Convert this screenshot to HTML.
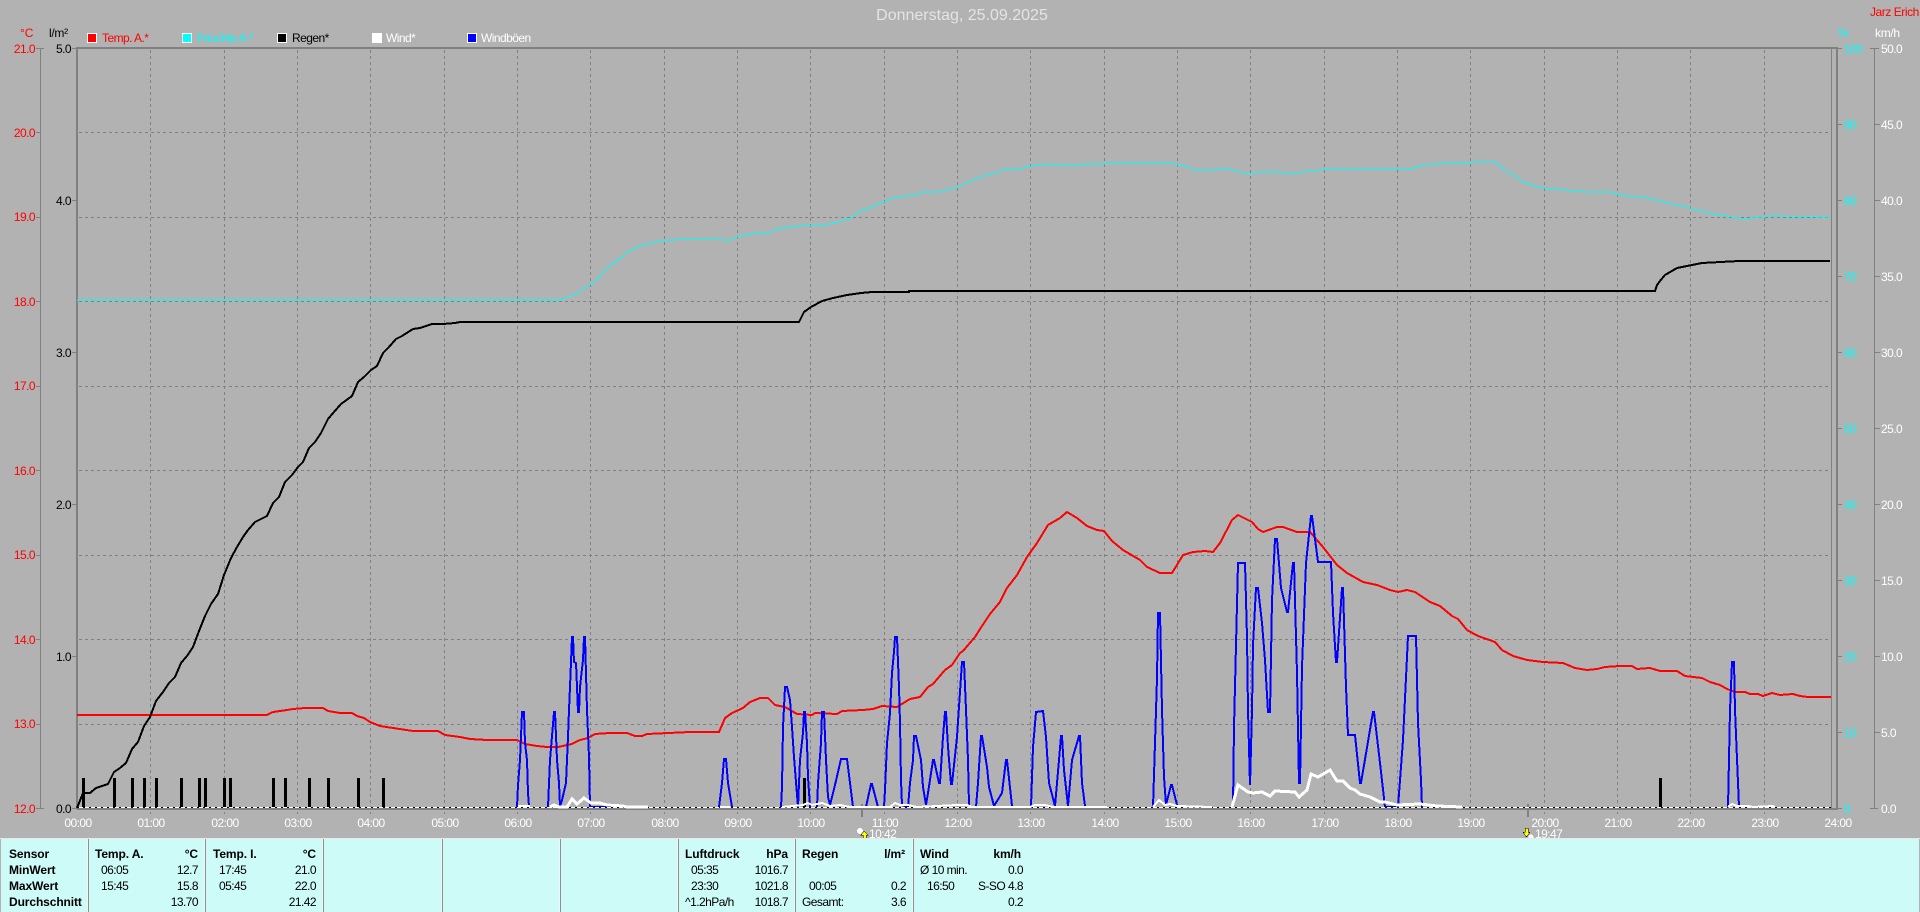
<!DOCTYPE html>
<html lang="de"><head><meta charset="utf-8"><title>Donnerstag, 25.09.2025</title>
<style>
html,body{margin:0;padding:0;width:1920px;height:912px;overflow:hidden;background:#b2b2b2}
svg{display:block;position:absolute;left:0;top:0}
text{font-family:"Liberation Sans",sans-serif;font-size:12px;letter-spacing:-.55px}
.b{font-weight:bold;letter-spacing:-.1px;fill:#000}
.t{fill:#000}
.e{text-anchor:end}
.m{text-anchor:middle;fill:#fff}
.r{fill:#f00}.c{fill:#0ff}.w{fill:#fff}
.g{stroke:#808080;stroke-width:1;stroke-dasharray:3 3;fill:none}
.l{fill:none;stroke-linejoin:miter}
.a{stroke:#808080;fill:none}
</style></head><body>
<svg width="1920" height="912" viewBox="0 0 1920 912" xmlns="http://www.w3.org/2000/svg" shape-rendering="crispEdges">
<rect width="1920" height="912" fill="#b2b2b2"/>

<!-- horizontal grid -->
<path class="g" d="M79 132.5H1831M79 217.5H1831M79 301.5H1831M79 386.5H1831M79 470.5H1831M79 555.5H1831M79 639.5H1831M79 724.5H1831"/>
<!-- vertical grid -->
<path class="g" d="M150.5 50V814M224.5 50V814M297.5 50V814M370.5 50V814M444.5 50V814M517.5 50V814M590.5 50V814M664.5 50V814M737.5 50V814M810.5 50V814M884.5 50V814M957.5 50V814M1030.5 50V814M1104.5 50V814M1177.5 50V814M1250.5 50V814M1324.5 50V814M1397.5 50V814M1470.5 50V814M1544.5 50V814M1617.5 50V814M1690.5 50V814M1764.5 50V814"/>

<!-- axes -->
<path class="a" stroke-width="2" d="M76 48H1838"/>
<path class="a" stroke-width="2" d="M77 47V809"/>
<path class="a" stroke-width="2" d="M1837 47V809"/>
<path class="a" stroke-width="1" d="M1831.5 48V808"/>
<path class="a" stroke-width="2" d="M77 809H1838"/>
<path class="a" stroke-width="1" d="M40.5 48V808M36 48.5H44M36 132.5H40M36 217.5H40M36 301.5H40M36 386.5H40M36 470.5H40M36 555.5H40M36 639.5H40M36 724.5H40M36 808.5H44"/>
<path class="a" stroke-width="1" d="M72 48.5H77M72 200.5H77M72 352.5H77M72 504.5H77M72 656.5H77M72 808.5H77"/>
<path class="a" stroke-width="1" d="M1838 48.5H1842M1838 124.5H1842M1838 200.5H1842M1838 276.5H1842M1838 352.5H1842M1838 428.5H1842M1838 504.5H1842M1838 580.5H1842M1838 656.5H1842M1838 732.5H1842M1838 808.5H1842"/>
<path class="a" stroke-width="1" d="M1874.5 48V808M1870 48.5H1879M1875 124.5H1880M1875 200.5H1880M1875 276.5H1880M1875 352.5H1880M1875 428.5H1880M1875 504.5H1880M1875 580.5H1880M1875 656.5H1880M1875 732.5H1880M1870 808.5H1878"/>
<path class="a" stroke-width="2" d="M862 804V817M1528 804V817"/>

<!-- rain bars -->
<path fill="none" stroke="#000" stroke-width="3" d="M83.5 778V807M114.5 778V807M132.5 778V807M144.5 778V807M156.5 778V807M181.5 778V807M199.5 778V807M205.5 778V807M224.5 778V807M230.5 778V807M273.5 778V807M285.5 778V807M309.5 778V807M328.5 778V807M358.5 778V807M383.5 778V807M804.5 778V807M1660.5 778V807"/>

<!-- temperature -->
<polyline class="l" stroke="#f00" stroke-width="2" points="77,715 267,715 273,712 287,710 293,709 305,708 323,708 328,711 340,713 352,713 357,716 364,718 370,722 380,726 393,728 413,731 438,731 445,735 460,737 470,739 487,740 517,740 525,744 537,746 547,747 558,747 572,744 580,740 588,738 595,734 610,733 627,733 635,736 642,736 647,734 690,732 719,732 725,718 732,713 743,708 750,702 760,698 768,698 775,705 785,707 797,714 812,715 815,713 837,714 842,711 863,710 873,709 882,706 897,707 910,699 920,697 928,687 933,684 945,670 952,665 960,653 963,651 975,637 982,626 990,614 1000,602 1007,588 1017,575 1027,557 1037,543 1048,525 1060,518 1067,512 1077,518 1087,526 1097,530 1104,531 1112,541 1123,550 1140,560 1147,567 1160,573 1172,573 1183,555 1193,552 1205,551 1213,552 1220,543 1232,520 1238,515 1252,522 1258,529 1263,532 1277,527 1283,527 1297,532 1310,532 1323,547 1337,565 1347,573 1363,582 1377,585 1390,590 1398,592 1407,590 1415,592 1430,602 1440,606 1452,616 1458,619 1467,630 1478,636 1495,642 1502,650 1513,656 1527,660 1543,662 1563,663 1575,668 1587,670 1597,669 1605,667 1620,666 1632,666 1637,669 1650,668 1660,671 1677,671 1685,676 1702,678 1710,682 1720,685 1727,689 1735,692 1745,692 1750,694 1758,694 1763,696 1772,693 1780,695 1793,694 1800,696 1808,697 1831,697"/>

<!-- humidity -->
<polyline class="l" stroke="#0ff" stroke-width="1" points="77,300 560,300 576,294 586,287 597,280 604,271 613,263 622,257 629,251 640,246 654,242 669,240 697,239 720,238 726,241 740,236 751,234 769,233 776,229 797,226 826,225 851,218 860,211 872,207 883,202 897,197 917,195 922,192 940,192 954,188 969,182 983,176 997,173 1004,169 1019,169 1029,166 1051,164 1056,166 1063,164 1076,166 1086,164 1100,164 1125,163 1171,163 1177,165 1186,166 1193,170 1216,170 1220,168 1234,170 1239,172 1250,174 1257,172 1280,172 1293,174 1300,172 1318,171 1323,169 1350,169 1354,168 1361,169 1411,169 1420,166 1432,164 1468,163 1471,162 1496,162 1504,170 1514,175 1521,181 1532,185 1543,188 1564,190 1586,192 1611,192 1618,195 1647,198 1690,208 1714,214 1745,219 1769,216 1830,217"/>

<!-- rain sum -->
<polyline class="l" stroke="#000" stroke-width="2" points="77,808 83,793 90,793 96,788 108,784 114,772 120,768 126,763 132,749 138,742 144,726 150,717 156,701 163,692 169,683 175,677 181,663 187,656 193,647 199,631 205,616 211,604 218,594 224,575 231,558 237,547 243,537 248,530 255,522 267,516 273,503 279,497 285,482 292,475 298,467 303,462 309,448 315,442 321,433 328,419 334,412 341,404 352,396 358,382 364,377 371,370 377,366 383,353 389,347 396,339 402,336 413,329 420,328 432,324 443,324 455,323 460,322 799,322 801,318 804,312 811,307 822,301 833,298 847,295 861,293 872,292 909,292 909,291 1655,291 1657,285 1660,281 1665,275 1677,268 1702,263 1739,261 1830,261"/>

<!-- gusts -->
<g fill="none" stroke="#00f" stroke-width="2">
<polyline points="517,807 518,785 520,760 522,712 524,712 525,743 527,760 528,793 529,806"/>
<polyline points="548,807 550,760 554,712 555,712 557,760 559,783 560,806 562,800 566,783 568,737 569,710 570,687 572,637 573,637 574,662 576,663 577,687 578,712 579,712 580,687 583,660 584,637 585,637 587,710 589,757 590,807 612,807"/>
<polyline points="719,807 722,783 724,759 726,759 728,783 732,807"/>
<polyline points="781,807 782,787 783,727 785,687 787,687 790,700 792,727 794,757 798,807 800,760 803,733 804,712 805,712 807,743 808,777 810,807"/>
<polyline points="817,807 818,783 821,743 822,712 824,712 826,760 828,797 830,805 835,785 841,759 847,759 850,783 853,807"/>
<polyline points="866,807 871,784 872,784 878,807"/>
<polyline points="884,807 885,790 887,743 890,713 892,673 894,652 895,637 897,637 899,687 900,723 901,780 902,805 908,807 910,783 913,760 914,736 916,736 921,760 923,787 926,805 928,793 933,760 934,760 939,783 940,783 943,737 945,712 946,712 948,747 951,784 952,784 957,737 962,662 964,662 966,710 968,760 969,805"/>
<polyline points="976,807 978,783 981,736 982,736 987,767 989,787 994,806 1002,793 1006,760 1007,760 1012,806"/>
<polyline points="1031,807 1033,747 1036,712 1043,711 1046,737 1049,783 1055,806 1059,760 1061,736 1062,736 1064,770 1068,806 1072,760 1079,736 1080,736 1082,783 1085,806"/>
<polyline points="1153,807 1155,743 1157,678 1158,613 1160,613 1162,710 1164,777 1166,805 1171,785 1172,785 1177,805"/>
<polyline points="1233,807 1234,727 1236,645 1238,563 1245,563 1247,637 1248,710 1250,785 1252,710 1253,645 1256,588 1258,588 1262,623 1265,660 1268,712 1270,712 1272,600 1275,539 1277,539 1281,588 1287,612 1288,612 1293,563 1294,563 1297,673 1299,783 1300,783 1302,667 1306,563 1311,516 1312,516 1318,562 1331,562 1333,613 1336,662 1337,662 1342,588 1343,588 1346,687 1348,735 1355,735 1360,783 1361,783 1373,712 1374,712 1380,763 1385,807 1398,807 1403,740 1408,636 1416,636 1418,723 1421,780 1422,807 1423,807"/>
<polyline points="1728,807 1729,759 1730,710 1732,662 1734,662 1735,710 1737,759 1739,807"/>
</g>

<!-- baseline -->
<path fill="none" stroke="#fff" stroke-width="1" d="M77 807.5H1831"/>
<path fill="none" stroke="#000" stroke-width="1" stroke-dasharray="2 4" d="M77 807.5H1831"/>

<!-- wind -->
<g fill="none" stroke="#fff" stroke-width="2">
<polyline points="518,806 530,806"/>
<polyline points="720,807 730,807"/>
<polyline points="782,807 803,805 808,803 812,805 822,803 830,806 840,805 850,807 890,807 895,803 900,805 908,805 917,807 957,805 967,805 972,807 1030,807 1035,805 1045,805 1053,807 1107,807"/>
<polyline points="1153,807 1159,800 1165,805 1170,804 1177,806 1212,807"/>
<polyline points="1728,807 1732,804 1737,806 1748,806 1753,807 1773,806 1775,807"/>
</g>
<g fill="none" stroke="#fff" stroke-width="3">
<polyline points="550,807 554,805 559,807 567,807 572,799 577,804 584,798 591,803 600,803 607,805 623,806 627,807 648,807"/>
<polyline points="1232,807 1238,785 1248,792 1253,793 1262,792 1270,796 1275,791 1295,792 1299,797 1307,790 1311,774 1318,777 1330,770 1337,781 1343,781 1350,788 1355,790 1360,794 1370,797 1380,802 1385,802 1397,805 1420,804 1437,806 1462,807"/>
</g>

<!-- sun icons -->
<circle cx="860" cy="831" r="3" fill="#fff"/>
<path fill="#ff0" stroke="#000" stroke-width=".5" d="M864 831l-3 4h2v4h3v-4h2z"/>
<path fill="#ff0" stroke="#000" stroke-width=".5" d="M1525 828h3v4h2l-3.500 5-3.500-5h2z"/>
<circle cx="1531" cy="837" r="2.500" fill="#fff"/>

<!-- title -->
<text x="962" y="20" text-anchor="middle" fill="#e4e4e4" style="font-size:16px;letter-spacing:0">Donnerstag, 25.09.2025</text>
<text class="r" x="1870" y="16" style="letter-spacing:-.45px">Jarz Erich</text>

<!-- unit labels -->
<text class="r" x="20" y="37" style="letter-spacing:0">°C</text>
<text class="t" x="49" y="37" style="letter-spacing:-.3px">l/m²</text>
<text class="c" x="1838" y="37" style="letter-spacing:0">%</text>
<text class="w" x="1875" y="37" style="letter-spacing:-.3px">km/h</text>

<!-- legend -->
<rect x="87.500" y="33.500" width="9" height="9" fill="#f00" stroke="#fff"/><text class="r" x="102" y="42">Temp. A.*</text>
<rect x="182.500" y="33.500" width="9" height="9" fill="#0ff" stroke="#fff"/><text class="c" x="197" y="42">Feuchte A.*</text>
<rect x="277.500" y="33.500" width="9" height="9" fill="#000" stroke="#fff"/><text class="t" x="292" y="42">Regen*</text>
<rect x="372.500" y="33.500" width="9" height="9" fill="#fff" stroke="#fff"/><text class="w" x="386" y="42">Wind*</text>
<rect x="467.500" y="33.500" width="9" height="9" fill="#00f" stroke="#fff"/><text class="w" x="481" y="42">Windböen</text>

<!-- temp axis -->
<g class="r" text-anchor="end">
<text x="35" y="53">21.0</text><text x="35" y="137">20.0</text><text x="35" y="221">19.0</text><text x="35" y="306">18.0</text><text x="35" y="390">17.0</text><text x="35" y="475">16.0</text><text x="35" y="559">15.0</text><text x="35" y="644">14.0</text><text x="35" y="728">13.0</text><text x="35" y="813">12.0</text>
</g>
<!-- rain axis -->
<g class="t" text-anchor="end">
<text x="71" y="53">5.0</text><text x="71" y="205">4.0</text><text x="71" y="357">3.0</text><text x="71" y="509">2.0</text><text x="71" y="661">1.0</text><text x="71" y="813">0.0</text>
</g>
<!-- humidity axis -->
<g class="c">
<text x="1844" y="53">100</text><text x="1844" y="129">90</text><text x="1844" y="205">80</text><text x="1844" y="281">70</text><text x="1844" y="357">60</text><text x="1844" y="433">50</text><text x="1844" y="509">40</text><text x="1844" y="585">30</text><text x="1844" y="661">20</text><text x="1844" y="737">10</text><text x="1844" y="813">0</text>
</g>
<!-- wind axis -->
<g class="w">
<text x="1881" y="53">50.0</text><text x="1881" y="129">45.0</text><text x="1881" y="205">40.0</text><text x="1881" y="281">35.0</text><text x="1881" y="357">30.0</text><text x="1881" y="433">25.0</text><text x="1881" y="509">20.0</text><text x="1881" y="585">15.0</text><text x="1881" y="661">10.0</text><text x="1881" y="737">5.0</text><text x="1881" y="813">0.0</text>
</g>

<!-- time axis -->
<text class="m" x="78" y="827">00:00</text><text class="m" x="151" y="827">01:00</text><text class="m" x="225" y="827">02:00</text><text class="m" x="298" y="827">03:00</text><text class="m" x="371" y="827">04:00</text><text class="m" x="445" y="827">05:00</text><text class="m" x="518" y="827">06:00</text><text class="m" x="591" y="827">07:00</text><text class="m" x="665" y="827">08:00</text><text class="m" x="738" y="827">09:00</text><text class="m" x="811" y="827">10:00</text><text class="m" x="885" y="827">11:00</text><text class="m" x="958" y="827">12:00</text><text class="m" x="1031" y="827">13:00</text><text class="m" x="1105" y="827">14:00</text><text class="m" x="1178" y="827">15:00</text><text class="m" x="1251" y="827">16:00</text><text class="m" x="1325" y="827">17:00</text><text class="m" x="1398" y="827">18:00</text><text class="m" x="1471" y="827">19:00</text><text class="m" x="1545" y="827">20:00</text><text class="m" x="1618" y="827">21:00</text><text class="m" x="1691" y="827">22:00</text><text class="m" x="1765" y="827">23:00</text><text class="m" x="1838" y="827">24:00</text>
<text class="w" x="869" y="838">10:42</text>
<text class="w" x="1535" y="838">19:47</text>

<!-- table -->
<rect x="0" y="838" width="1920" height="1" fill="#e8e8e8"/>
<rect x="1" y="839" width="1918" height="73" fill="#ccfbf8"/>
<path fill="none" stroke="#909090" stroke-width="1" d="M88.500 839V912M205.500 839V912M323.500 839V912M442.500 839V912M560.500 839V912M678.500 839V912M795.500 839V912M913.500 839V912"/>
<path fill="none" stroke="#f4f4f4" stroke-width="1" d="M87.500 839V912M204.500 839V912M322.500 839V912M441.500 839V912M559.500 839V912M677.500 839V912M794.500 839V912M912.500 839V912"/>

<text class="b" x="9" y="858">Sensor</text><text class="b" x="9" y="874">MinWert</text><text class="b" x="9" y="890">MaxWert</text><text class="b" x="9" y="906">Durchschnitt</text>

<text class="b" x="95" y="858">Temp. A.</text><text class="b e" x="198" y="858">°C</text>
<text class="t" x="101" y="874">06:05</text><text class="t e" x="198" y="874">12.7</text>
<text class="t" x="101" y="890">15:45</text><text class="t e" x="198" y="890">15.8</text>
<text class="t e" x="198" y="906">13.70</text>

<text class="b" x="213" y="858">Temp. I.</text><text class="b e" x="316" y="858">°C</text>
<text class="t" x="219" y="874">17:45</text><text class="t e" x="316" y="874">21.0</text>
<text class="t" x="219" y="890">05:45</text><text class="t e" x="316" y="890">22.0</text>
<text class="t e" x="316" y="906">21.42</text>

<text class="b" x="685" y="858">Luftdruck</text><text class="b e" x="788" y="858">hPa</text>
<text class="t" x="691" y="874">05:35</text><text class="t e" x="788" y="874">1016.7</text>
<text class="t" x="691" y="890">23:30</text><text class="t e" x="788" y="890">1021.8</text>
<text class="t" x="685" y="906">^1.2hPa/h</text><text class="t e" x="788" y="906">1018.7</text>

<text class="b" x="802" y="858">Regen</text><text class="b e" x="905" y="858">l/m²</text>
<text class="t" x="809" y="890">00:05</text><text class="t e" x="906" y="890">0.2</text>
<text class="t" x="802" y="906">Gesamt:</text><text class="t e" x="906" y="906">3.6</text>

<text class="b" x="920" y="858">Wind</text><text class="b e" x="1021" y="858">km/h</text>
<text class="t" x="920" y="874">Ø 10 min.</text><text class="t e" x="1023" y="874">0.0</text>
<text class="t" x="927" y="890">16:50</text><text class="t e" x="1023" y="890">S-SO 4.8</text>
<text class="t e" x="1023" y="906">0.2</text>
</svg>
</body></html>
